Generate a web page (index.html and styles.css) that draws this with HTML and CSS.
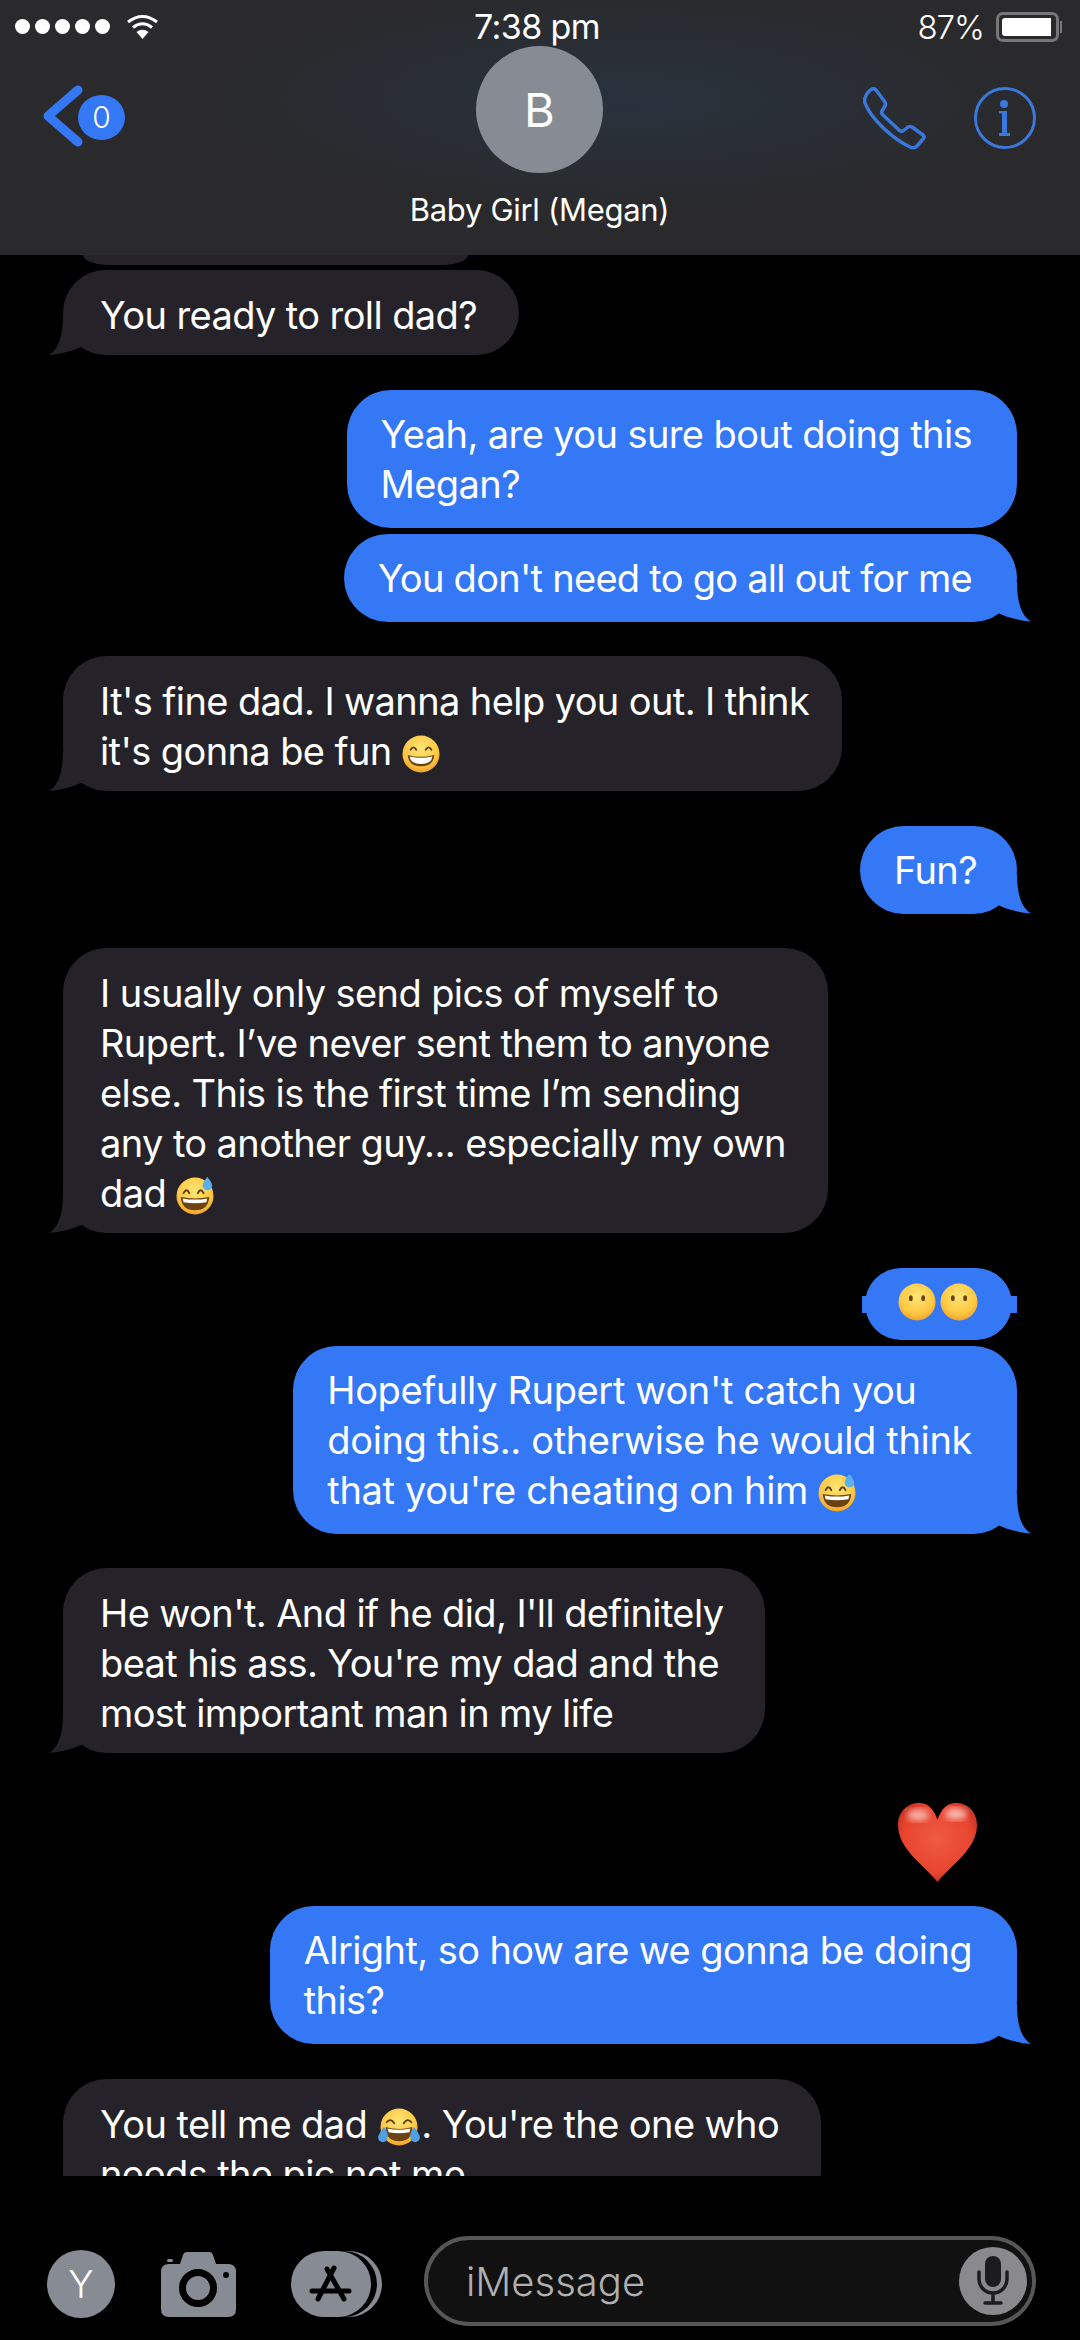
FILE: index.html
```html
<!DOCTYPE html>
<html lang="en">
  <head>
    <meta charset="UTF-8" />
    <title>Messages</title>
    <link rel="stylesheet" href="styles.css">
  </head>
  <body>
    <svg class="defs" xmlns="http://www.w3.org/2000/svg">
      <defs>
        <radialGradient id="faceFill" cx="50%" cy="35%" r="70%">
          <stop offset="0" stop-color="#ffe675" />
          <stop offset="0.65" stop-color="#fdc843" />
          <stop offset="1" stop-color="#f09a22" />
        </radialGradient>
        <radialGradient id="heartFill" cx="50%" cy="45%" r="62%">
          <stop offset="0" stop-color="#ee5a44" />
          <stop offset="0.7" stop-color="#e8452f" />
          <stop offset="1" stop-color="#b82a1c" />
        </radialGradient>
        <filter id="soft"><feGaussianBlur stdDeviation="3" /></filter>
        <symbol id="grin" viewBox="0 0 40 40">
          <circle cx="20" cy="20" r="19.5" fill="url(#faceFill)" />
          <path d="M9 15.5q3-5 6 0M25 15.5q3-5 6 0" fill="none" stroke="#5f3b10" stroke-width="2" stroke-linecap="round" />
          <path d="M6 21q14 4 28 0q-1 12-14 12T6 21z" fill="#6b4212" />
          <path d="M8 22.500q12 3 24 0q-1 8-12 8t-12-8z" fill="#fff" />
        </symbol>
        <symbol id="sweat" viewBox="0 0 40 40">
          <circle cx="20" cy="20" r="19.500" fill="url(#faceFill)" />
          <path d="M8 17q3-6 6 0M23 17q3-6 6 0" fill="none" stroke="#5f3b10" stroke-width="2" stroke-linecap="round" />
          <path d="M5 21q15 3 30 0q-1 14-15 14T5 21z" fill="#6b4212" />
          <path d="M7 22.500q13 2.500 26 0l-1 4q-12 2-24 0z" fill="#fff" />
          <path d="M33 0q5 6 5 9a5 5 0 0 1-10 0q0-3 5-9z" fill="#5bb0ea" />
        </symbol>
        <symbol id="blank" viewBox="0 0 40 40">
          <circle cx="20" cy="20" r="19.500" fill="url(#faceFill)" />
          <ellipse cx="13.500" cy="16" rx="2" ry="3" fill="#6b4212" />
          <ellipse cx="26.500" cy="16" rx="2" ry="3" fill="#6b4212" />
        </symbol>
        <symbol id="joy" viewBox="0 0 46 40">
          <circle cx="23" cy="20" r="19.500" fill="url(#faceFill)" />
          <path d="M10 15q4-5 8 1M28 16q4-6 8-1" fill="none" stroke="#5f3b10" stroke-width="2" stroke-linecap="round" />
          <path d="M9 20q14 4 28 0q0 15-14 15T9 20z" fill="#6b4212" />
          <path d="M11 21.500q12 3 24 0l-1 4q-11 2-22 0z" fill="#fff" />
          <path d="M7 20q-6 8-6 11a5 5 0 0 0 10 0q1-5-4-11zM39 20q6 8 6 11a5 5 0 0 1-10 0q-1-5 4-11z" fill="#4f9fe6" />
        </symbol>
      </defs>
    </svg>

    <header class="top-bar">
      <div class="status-bar">
        <div class="status-left">
          <span class="signal"><i></i><i></i><i></i><i></i><i></i></span>
          <svg class="wifi" width="33" height="25" viewBox="0 0 33 25">
            <path d="M2 8Q16.500-3 31 8M7 13.500Q16.500 6 26 13.500" fill="none" stroke="#fff" stroke-width="3" />
            <path d="M10.500 18Q16.500 13.500 22.500 18L16.500 25z" fill="#fff" />
          </svg>
        </div>
        <div class="clock">7:38 pm</div>
        <div class="status-right">
          <span>87%</span>
          <span class="battery"><span class="battery-level"></span></span>
        </div>
      </div>
      <div class="nav-bar">
        <div class="back">
          <svg width="42" height="64" viewBox="0 0 42 64">
            <path d="M35 6L5 32l30 26" fill="none" stroke="#3478f6" stroke-width="9" stroke-linecap="round" stroke-linejoin="round" />
          </svg>
          <span class="back-count">0</span>
        </div>
        <div class="contact">
          <div class="avatar">B</div>
          <div class="contact-name">Baby Girl (Megan)</div>
        </div>
        <div class="nav-actions">
          <svg width="64" height="64" viewBox="0 0 64 64">
            <path d="M2 11Q4 5 9 2Q11 1 13 3L22 15Q23 17 22 19L19 24Q18 26 20 28L36 43Q38 45 40 44L45 40Q47 39 49 40L60 48Q62 50 60 52L54 59Q51 62 47 60C30 52 8 32 2 16Q1 13 2 11z" fill="none" stroke="#3a78dc" stroke-width="3.500" stroke-linejoin="round" />
          </svg>
          <svg width="62" height="62" viewBox="0 0 62 62">
            <circle cx="31" cy="31" r="29.500" fill="none" stroke="#3a78dc" stroke-width="3" />
            <circle cx="30" cy="17" r="4" fill="#3a78dc" />
            <path d="M25 24h8v22h3v3H25v-3h3V26.500h-3z" fill="#3a78dc" />
          </svg>
        </div>
      </div>
    </header>

    <main class="thread">
      <div class="peek"></div>
      <div class="bubble recv first">You ready to roll dad?</div>
      <div class="bubble sent">Yeah, are you sure bout doing this<br>Megan?</div>
      <div class="bubble sent tight tail tighter">You don't need to go all out for me</div>
      <div class="bubble recv snug">It's fine dad. I wanna help you out. I think<br>it's gonna be fun <svg class="emoji"><use href="#grin" /></svg></div>
      <div class="bubble sent tail snug">Fun?</div>
      <div class="bubble recv">I usually only send pics of myself to<br>Rupert. I’ve never sent them to anyone<br>else. This is the first time I’m sending<br>any to another guy... especially my own<br>dad <svg class="emoji"><use href="#sweat" /></svg></div>
      <div class="bubble sent nubbed"><svg class="emoji"><use href="#blank" /></svg><svg class="emoji"><use href="#blank" /></svg></div>
      <div class="bubble sent tight tail loose">Hopefully Rupert won't catch you<br>doing this.. otherwise he would think<br>that you're cheating on him <svg class="emoji"><use href="#sweat" /></svg></div>
      <div class="bubble recv">He won't. And if he did, I'll definitely<br>beat his ass. You're my dad and the<br>most important man in my life</div>
      <svg class="big-heart" width="79" height="79" viewBox="0 0 79 79">
        <path d="M39.500 79C26 62 0 46 0 22C0 8 10 0 21 0C30 0 36 6 39.500 17C43 6 49 0 58 0C69 0 79 8 79 22C79 46 53 62 39.500 79z" fill="url(#heartFill)" />
        <ellipse cx="20" cy="12" rx="11" ry="6" fill="#fff" opacity="0.55" filter="url(#soft)" />
        <ellipse cx="58" cy="11" rx="11" ry="6" fill="#fff" opacity="0.6" filter="url(#soft)" />
      </svg>
      <div class="bubble sent after-heart tail">Alright, so how are we gonna be doing<br>this?</div>
      <div class="bubble recv">You tell me dad <svg class="emoji joy"><use href="#joy" /></svg>. You're the one who<br>needs the pic not me</div>
    </main>

    <footer class="composer">
      <div class="tools">
        <div class="me-avatar">Y</div>
        <svg class="camera" width="75" height="65" viewBox="0 0 75 65">
          <path d="M8 12h11l3-9q1-3 4-3h22q3 0 4 3l3 9h12q8 0 8 8v37q0 8-8 8H8q-8 0-8-8V20q0-8 8-8z" fill="#878b94" />
          <rect x="6" y="7" width="6" height="3" rx="1.500" fill="#878b94" />
          <circle cx="37" cy="36" r="15.500" fill="none" stroke="#000" stroke-width="7" />
          <circle cx="65" cy="23" r="3" fill="#000" />
        </svg>
        <svg class="apps" width="91" height="66" viewBox="0 0 91 66">
          <rect x="12" width="79" height="66" rx="33" fill="#878b94" />
          <rect x="6" width="80" height="66" rx="33" fill="#000" />
          <rect width="80" height="66" rx="33" fill="#878b94" />
          <path d="M43 17L27 48M36 18L53 48M21 40H58" fill="none" stroke="#000" stroke-width="5" stroke-linecap="round" />
        </svg>
      </div>
      <div class="message-input">
        <span class="placeholder">iMessage</span>
        <span class="mic">
          <svg width="40" height="52" viewBox="0 0 40 52">
            <rect x="12" y="1" width="16" height="31" rx="8" fill="#1c1c1e" />
            <path d="M6 17v7a14 14 0 0 0 28 0v-7M20 38v9M12 48h16" fill="none" stroke="#1c1c1e" stroke-width="3.500" stroke-linecap="round" />
          </svg>
        </span>
      </div>
    </footer>
  </body>
</html>
```

FILE: styles.css
```css
* {
  box-sizing: border-box;
}
html,
body {
  margin: 0;
  padding: 0;
}
body {
  width: 1080px;
  height: 2340px;
  overflow: hidden;
  background-color: #000;
  color: #fff;
  font-family: Inter, "Liberation Sans", sans-serif;
  display: flex;
  flex-direction: column;
}
.defs {
  position: absolute;
  width: 0;
  height: 0;
}

/* top bar */
.top-bar {
  height: 255px;
  flex: none;
  background: radial-gradient(ellipse 420px 110px at 620px 100px, #28323d, rgba(42, 42, 44, 0)), #2a2a2c;
}
.status-bar {
  height: 46px;
  padding: 6px 21px 0 15px;
  display: grid;
  grid-template-columns: 1fr auto 1fr;
  align-items: center;
}
.status-left {
  display: flex;
  align-items: center;
  gap: 16px;
}
.signal {
  display: flex;
  gap: 5px;
}
.signal i {
  width: 15px;
  height: 15px;
  border-radius: 50%;
  background-color: #fff;
}
.clock {
  font-size: 34px;
  letter-spacing: -0.6px;
}
.status-right {
  display: flex;
  justify-content: flex-end;
  align-items: center;
  gap: 12px;
  font-size: 33px;
  font-weight: 300;
  letter-spacing: -1px;
}
.battery {
  position: relative;
  width: 63px;
  height: 30px;
  padding: 3px;
  border: 3px solid #777;
  border-radius: 7px;
  display: block;
}
.battery::after {
  content: "";
  position: absolute;
  right: -6px;
  top: 6px;
  width: 2px;
  height: 12px;
  background-color: #777;
}
.battery-level {
  display: block;
  width: 49px;
  height: 100%;
  background-color: #fff;
  border-radius: 3px 0 0 3px;
}
.nav-bar {
  display: grid;
  grid-template-columns: 1fr auto 1fr;
  padding: 0 44px 0 43px;
}
.back {
  height: 64px;
  margin-top: 38px;
  display: flex;
  align-items: center;
}
.back-count {
  width: 47px;
  height: 45px;
  margin-left: -7px;
  margin-top: 2px;
  border-radius: 50%;
  background-color: #3478f6;
  font-size: 30px;
  font-weight: 300;
  line-height: 45px;
  text-align: center;
}
.contact {
  display: flex;
  flex-direction: column;
  align-items: center;
}
.avatar {
  width: 127px;
  height: 127px;
  border-radius: 50%;
  background-color: #878b94;
  font-size: 47px;
  line-height: 127px;
  text-align: center;
}
.contact-name {
  margin-top: 17px;
  font-size: 31px;
  letter-spacing: -0.3px;
  line-height: 40px;
  white-space: nowrap;
}
.nav-actions {
  margin-top: 41px;
  display: flex;
  justify-content: flex-end;
  align-items: flex-start;
  gap: 47px;
}

/* messages */
.thread {
  height: 1921px;
  flex: none;
  overflow: hidden;
  padding: 0 63px;
  display: flex;
  flex-direction: column;
}
.peek {
  width: 385px;
  height: 10px;
  margin-left: 20px;
  flex: none;
  background-color: #252329;
  border-radius: 0 0 26px 26px / 0 0 10px 10px;
}
.bubble {
  position: relative;
  flex: none;
  width: fit-content;
  margin-top: 34.5px;
  padding: 19px 45px 19px 34px;
  border-radius: 44px;
  font-size: 38px;
  letter-spacing: -0.6px;
  line-height: 50px;
  white-space: nowrap;
}
.recv {
  background-color: #252329;
  padding: 20px 42px 15px 37px;
}
.sent {
  margin-left: auto;
  background-color: #3478f6;
}
.bubble.snug {
  padding-right: 33px;
}
.sent.snug {
  padding-right: 40px;
}
.loose {
  letter-spacing: -0.35px;
}
.tighter {
  letter-spacing: -0.73px;
}
.first {
  margin-top: 5px;
}
.tight {
  margin-top: 6px;
}
.after-heart {
  margin-top: 24px;
}
.recv::after,
.tail::after {
  content: "";
  position: absolute;
  bottom: 0;
  width: 50px;
  height: 40px;
  background-color: inherit;
}
.tail::after {
  right: -14px;
  clip-path: path("M36 0C36 20 40 34 50 40C38 39 26 36 16 31L0 20L16 0z");
}
.recv::after {
  left: -14px;
  clip-path: path("M14 0C14 20 10 34 0 40C12 39 24 36 34 31L50 20L34 0z");
}
.nubbed {
  margin-right: 5px;
  padding: 15px 34px 19px 33px;
  height: 72px;
  line-height: 38px;
  display: flex;
  gap: 4px;
}
.nubbed::before {
  content: "";
  position: absolute;
  left: -3px;
  right: -5px;
  top: 28px;
  height: 17px;
  background-color: inherit;
}
.nubbed .emoji {
  position: relative;
  margin: 0;
}
.emoji {
  width: 38px;
  height: 38px;
  vertical-align: -8px;
}
.joy {
  width: 44px;
  height: 38px;
}
.big-heart {
  flex: none;
  margin: 50px 40px 0 auto;
}

/* composer */
.composer {
  height: 164px;
  flex: none;
  padding: 60px 44px 0 47px;
  display: flex;
  align-items: flex-start;
  gap: 42px;
}
.tools {
  margin-top: 14px;
  display: flex;
  align-items: center;
}
.me-avatar {
  width: 68px;
  height: 68px;
  border-radius: 50%;
  background-color: #878b94;
  font-size: 38px;
  font-weight: 300;
  line-height: 68px;
  text-align: center;
}
.camera {
  margin-left: 46px;
}
.apps {
  margin-left: 55px;
}
.message-input {
  flex: 1;
  height: 90px;
  padding: 0 5px 0 38px;
  border: 4px solid #575757;
  border-radius: 45px;
  background-color: #111;
  display: flex;
  align-items: center;
  justify-content: space-between;
}
.placeholder {
  font-size: 40px;
  font-weight: 300;
  color: #b0b0b0;
}
.mic {
  width: 68px;
  height: 68px;
  border-radius: 50%;
  background-color: #8a8a8e;
  display: flex;
  align-items: center;
  justify-content: center;
}
```
